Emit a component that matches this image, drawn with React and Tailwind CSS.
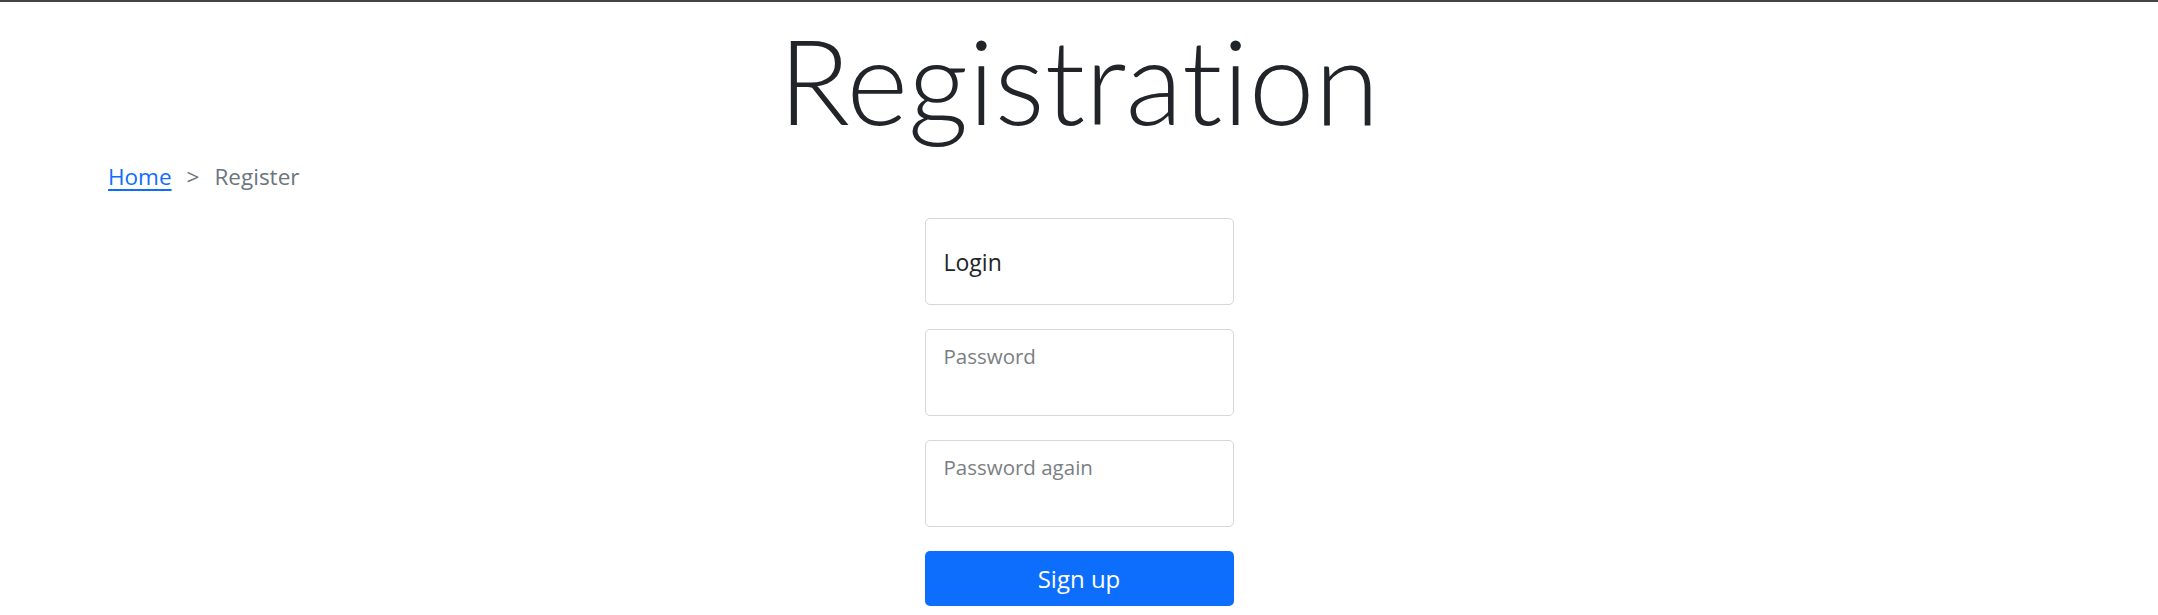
import React from "react";

const font = { fontFamily: '"Open Sans", "Noto Sans", "Liberation Sans", sans-serif' };
const titleFont = { fontFamily: 'Lato, "Open Sans", sans-serif' };

// floating-label style field, label sits at the top when it is small
const Field = ({ label, big }) => (
  <div className="w-full h-[87px] border border-[#d4d7dc] rounded-[5px] bg-white">
    {big ? (
      <div className="pl-[18px] pt-[32px] text-[23px] leading-none text-[#212529]">{label}</div>
    ) : (
      <div className="pl-[18px] pt-[16px] text-[20.5px] leading-none text-[#7b7e82]">{label}</div>
    )}
  </div>
);

const App = () => {
  return (
    <div className="w-full min-h-screen bg-white" style={font}>
      <div className="h-[2px] bg-[#444444]" />

      {/* Title */}
      <div className="flex justify-center mt-[19px]">
        <h1
          className="text-[118px] leading-none font-light text-[#212529] [font-variant-ligatures:none]"
          style={titleFont}
        >
          Registration
        </h1>
      </div>

      {/* Breadcrumb */}
      <nav className="flex items-center px-[108px] mt-[27px] text-[22.5px] leading-[22px]">
        <a href="#" className="text-[#0d6efd] underline underline-offset-[4px]">Home</a>
        <span className="px-[15px] text-[#6c757d]">&gt;</span>
        <span className="text-[#6c757d]">Register</span>
      </nav>

      {/* Form */}
      <div className="flex justify-center mt-[30px]">
        <form className="w-[309px] flex flex-col gap-[24px]" onSubmit={(e) => e.preventDefault()}>
          <Field label="Login" big />
          <Field label="Password" />
          <Field label="Password again" />
          <button
            type="submit"
            className="h-[55px] rounded-[5px] bg-[#0d6efd] text-white text-[24px] leading-none flex items-center justify-center"
          >
            Sign up
          </button>
        </form>
      </div>
    </div>
  );
};

export default App;
